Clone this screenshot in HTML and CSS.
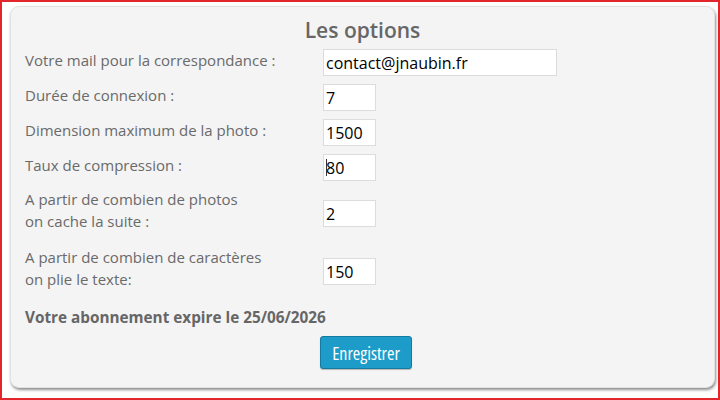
FILE: index.html
```html
<!DOCTYPE html>
<html lang="fr">
<head>
<meta charset="utf-8">
<title>Les options</title>
<link rel="stylesheet" href="styles.css">
</head>
<body>
<div class="frame">
  <form class="card">
    <h2 class="title">Les options</h2>
    <div class="rows">
      <div class="row">
        <label class="lbl">Votre mail pour la correspondance :</label>
        <input class="field wide" type="text" value="contact@jnaubin.fr">
      </div>
      <div class="row">
        <label class="lbl">Durée de connexion :</label>
        <input class="field short" type="text" value="7">
      </div>
      <div class="row">
        <label class="lbl">Dimension maximum de la photo :</label>
        <input class="field short" type="text" value="1500">
      </div>
      <div class="row">
        <label class="lbl">Taux de compression :</label>
        <span class="caret-wrap"><input class="field short" type="text" value="80"><span class="caret"></span></span>
      </div>
      <div class="row row-multi">
        <label class="lbl">A partir de combien de photos<br>on cache la suite :</label>
        <input class="field short" type="text" value="2">
      </div>
      <div class="row row-last">
        <label class="lbl">A partir de combien de caractères<br>on plie le texte:</label>
        <input class="field short" type="text" value="150">
      </div>
    </div>
    <p class="expire">Votre abonnement expire le 25/06/2026</p>
    <div class="actions">
      <button class="btn" type="button">Enregistrer</button>
    </div>
  </form>
</div>
</body>
</html>
```

FILE: styles.css
```css
html, body {
  margin: 0;
  padding: 0;
  background: #ffffff;
}

.frame {
  width: 720px;
  height: 400px;
  box-sizing: border-box;
  border: 2px solid #e3262b;
  padding: 4px 3px 0 8px;
  font-family: "Open Sans", "Noto Sans", sans-serif;
}

.card {
  box-sizing: border-box;
  width: 705px;
  height: 382px;
  background: #f4f4f4;
  border: 1px solid #e2e2e2;
  border-radius: 9px;
  box-shadow: 1px 2px 3px rgba(0, 0, 0, 0.45);
  padding: 8px 14px 0 14px;
  color: #666666;
}

.title {
  margin: 0;
  text-align: center;
  font-size: 21px;
  font-weight: 600;
  line-height: 30px;
  color: #666666;
}

.rows {
  margin-top: 4px;
  display: flex;
  flex-direction: column;
  gap: 8px;
}

.row {
  display: grid;
  grid-template-columns: 298px auto;
  align-items: center;
}

.row-multi {
  margin-top: 2px;
}

.row-last {
  margin-top: 6px;
}

.lbl {
  font-size: 15px;
  line-height: 22px;
  color: #6a6a6a;
  transform: translateY(-3px);
}

.field {
  box-sizing: border-box;
  height: 27px;
  border: 1px solid #dcdcdc;
  background: #ffffff;
  padding: 1px 2px 0 2px;
  margin: 0;
  font-family: "Open Sans", "Noto Sans", sans-serif;
  font-size: 16px;
  color: #000000;
  outline: none;
  display: block;
}

.wide {
  width: 234px;
}

.short {
  width: 53px;
}

.caret-wrap {
  position: relative;
  display: block;
  width: 53px;
}

.caret {
  position: absolute;
  left: 3px;
  top: 5px;
  width: 1px;
  height: 17px;
  background: #333333;
}

.expire {
  margin: 13px 0 0 0;
  font-size: 15.3px;
  line-height: 22px;
  font-weight: 700;
  color: #666666;
}

.actions {
  display: flex;
  justify-content: center;
  margin-top: 8px;
  padding-left: 7px;
}

.btn {
  height: 33px;
  width: 92px;
  padding: 0;
  background: #1d9cc9;
  border: 1px solid #157aa0;
  border-radius: 3px;
  color: #ffffff;
  font-family: "Open Sans", "Noto Sans", sans-serif;
  font-stretch: 87%;
  font-size: 18px;
  box-shadow: 0 1px 1px rgba(0, 0, 0, 0.25);
}
```
